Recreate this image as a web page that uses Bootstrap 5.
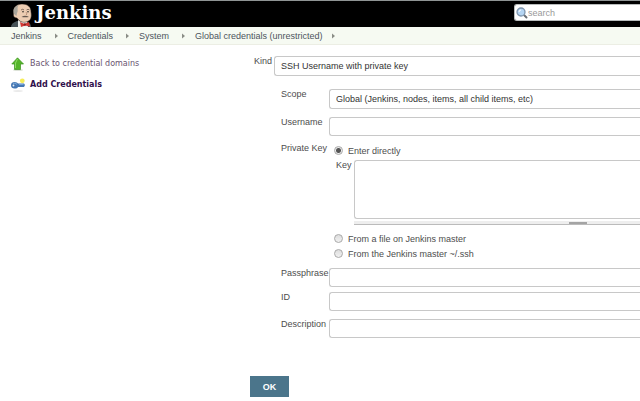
<!DOCTYPE html>
<html lang="en">
<head>
<meta charset="utf-8">
<meta name="viewport" content="width=device-width, initial-scale=1">
<title>Add Credentials [Jenkins]</title>
<link href="https://cdn.jsdelivr.net/npm/bootstrap@5.3.0/dist/css/bootstrap.min.css" rel="stylesheet">
<style>
body{font-family:"Liberation Sans",Arial,sans-serif;font-size:9px;line-height:12px;color:#4d4d4d;background:#fff}
.topbar{background:#000;border-top:1px solid #8f9494;height:27px;padding-left:11px}
.brand-name{font-family:"DejaVu Serif",Georgia,serif;font-weight:700;font-size:18px;line-height:24px;color:#fff}
.brand-link{gap:4px}
.brand-link svg{margin-top:3px}
.search-box{width:126px;height:17px;margin-top:3px;background:#fff;border:1px solid #b8bcbc;border-right:0;border-radius:3px 0 0 3px;padding-left:1px}
.search-box input{border:0;outline:0;background:transparent;padding:0;font-size:9px;line-height:12px;min-width:0}
.search-box input::placeholder{color:#999;opacity:1}
.crumbs{background:#f6faf2;border-bottom:1px solid #eceee4;height:18px;padding-left:11px}
.crumbs a{color:#4d545d}
.crumbs .sep{width:26px}
.side{width:250px;padding:12px 0 0 11px}
.side a{color:#6a5470;font-family:"DejaVu Sans",Verdana,sans-serif;font-size:8px;gap:5px;height:14px}
.side .task-list{gap:7px}
.side a.active-task{color:#30104c;font-weight:700}
.config{padding-top:11px}
.config label,.lab{line-height:10px}
.kind-row{padding-left:4px;gap:3px}
.kind-row label{width:17px}
.nested{padding-left:31px}
.nested .lab{width:48px}
.field{height:19px;border:1px solid #c8c8c8;border-right:0;border-radius:3px 0 0 3px;padding:0 6px;background:#fff;color:#333;font-size:9px;line-height:12px;appearance:none;min-width:0;outline:0}
select.field{height:20px}
.row-a{margin-top:13px}
.row-b{margin-top:8px}
.row-c{margin-top:5px}
.row-d{margin-top:7px}
.choice{gap:5px;height:15px;padding-left:5px}
.choice input{appearance:none;width:9px;height:9px;margin:0;border:1px solid #a9a9a9;border-radius:50%;background:linear-gradient(#ddd,#f1f1f1)}
.choice input:checked{background:radial-gradient(circle,#555 0 2px,#ececec 3px)}
.key-row{padding-left:7px;gap:2px;margin-top:2px}
.key-row label{width:16px}
.key-row textarea{height:59px;resize:none;padding:3px 6px}
.grip{height:4px;margin-top:2px;background:#eee;border-bottom:1px solid #bbb;padding-left:215px}
.grip span{width:18px;height:2px;background:#a4a4a4}
.after-key{margin-top:6px}
.ok-btn{--bs-btn-color:#fff;--bs-btn-bg:#4b758b;--bs-btn-border-color:#4b758b;--bs-btn-hover-bg:#3d6478;--bs-btn-hover-color:#fff;width:39px;height:21px;padding:0;font-size:9px;line-height:12px;font-weight:700;margin-top:38px}
</style>
<script src="https://cdn.jsdelivr.net/npm/bootstrap@5.3.0/dist/js/bootstrap.bundle.min.js" defer></script>
</head>
<body class="overflow-x-hidden">
<header class="topbar d-flex justify-content-between align-items-start">
  <a class="brand-link d-flex text-decoration-none" href="#">
    <svg width="21" height="23" viewBox="0 0 21 23" class="flex-shrink-0" aria-hidden="true">
      <path d="M0 23Q0 19 6 17L16 18Q20 19 20 23Z" fill="#465257"/>
      <path d="M7 16L11 18L16 17L17 23H7Z" fill="#eef0ee"/>
      <path d="M3 8C2 3 6 0 11 0C17 0 20 3 20 8C21 13 20 17 15 18C11 19 8 17 6 14C2 14 2 10 3 8Z" fill="#edcdb2" stroke="#2c211c" stroke-width=".5"/>
      <path d="M3 10C1 5 4 2 8 1C5 4 8 6 6 9L5.500 12Z" fill="#aaa69c"/>
      <path d="M10 6Q12 4.500 13 6M15.500 6Q17 4.500 18.500 6" fill="none" stroke="#6a564a" stroke-width=".8"/>
      <circle cx="12" cy="7.800" r=".8" fill="#292521"/><circle cx="17" cy="7.800" r=".8" fill="#292521"/>
      <path d="M15 8Q17 10.500 15 11" fill="none" stroke="#a97c64" stroke-width=".7"/>
      <path d="M10.500 13Q14 10.500 18 13Q14 13.500 10.500 13Z" fill="#66594f"/>
      <path d="M9 18L13.500 20L18 18L19 22.500L14 21.500L10 23Z" fill="#d33833"/>
      <circle cx="13.800" cy="20.500" r="1.200" fill="#8c1b1b"/>
    </svg>
    <span class="brand-name">Jenkins</span>
  </a>
  <form class="search-box d-flex align-items-center" onsubmit="return false">
    <svg width="12" height="12" viewBox="0 0 12 12" class="flex-shrink-0" aria-hidden="true">
      <path d="M8 8L10.500 10.500" stroke="#6b6f74" stroke-width="2" stroke-linecap="round"/>
      <circle cx="5" cy="5" r="4" fill="#b5d5f3" stroke="#7f96ae" stroke-width="1.300"/>
      <path d="M3 5Q3 3 5 3" stroke="#fff" fill="none"/>
    </svg>
    <input class="flex-grow-1" type="text" placeholder="search" aria-label="search">
  </form>
</header>
<nav class="crumbs d-flex align-items-center" aria-label="breadcrumb">
  <a class="text-decoration-none" href="#">Jenkins</a>
  <svg class="sep" height="6" viewBox="0 0 26 6" aria-hidden="true"><path d="M13 .5L16 3L13 5.500Z" fill="#8a8d86"/></svg>
  <a class="text-decoration-none" href="#">Credentials</a>
  <svg class="sep" height="6" viewBox="0 0 26 6" aria-hidden="true"><path d="M13 .5L16 3L13 5.500Z" fill="#8a8d86"/></svg>
  <a class="text-decoration-none" href="#">System</a>
  <svg class="sep" height="6" viewBox="0 0 26 6" aria-hidden="true"><path d="M13 .5L16 3L13 5.500Z" fill="#8a8d86"/></svg>
  <a class="text-decoration-none" href="#">Global credentials (unrestricted)</a>
  <svg class="sep" height="6" viewBox="0 0 26 6" aria-hidden="true"><path d="M9 .5L12 3L9 5.500Z" fill="#8a8d86"/></svg>
</nav>
<div class="d-flex">
  <aside class="side flex-shrink-0">
    <div class="task-list d-flex flex-column">
      <a class="d-flex align-items-center text-decoration-none" href="#">
        <svg width="14" height="14" viewBox="0 0 14 14" aria-hidden="true"><ellipse cx="7" cy="13" rx="5" ry="1" fill="#dde3d8"/><path d="M6.500 .8L12.500 7H9.500V12.500H3.500V7H.8Z" fill="#55b52b" stroke="#3b921c" stroke-width=".7"/><path d="M6.500 2L4.500 6V11" fill="none" stroke="#8fdc65"/></svg>
        <span>Back to credential domains</span>
      </a>
      <a class="active-task d-flex align-items-center text-decoration-none" href="#">
        <svg width="14" height="14" viewBox="0 0 14 14" aria-hidden="true"><ellipse cx="7" cy="13" rx="5" ry=".8" fill="#e4e4e4"/><circle cx="11.300" cy="2.800" r="2.400" fill="#f6ed58"/><path d="M3.500 4C5.500 4 6.500 4.800 7 5.500H13L14 7L13 9H7C6.500 10 5.500 10.500 3.500 10.500C1.500 10.500 0 9.500 0 7.300S1.500 4 3.500 4Z" fill="#4678b4"/><path d="M2 5.500Q4 4.500 6 6.300M8 6.500H12.500" fill="none" stroke="#82aede" stroke-width=".8"/><circle cx="2.500" cy="7.500" r=".9" fill="#e6eef7"/></svg>
        <span>Add Credentials</span>
      </a>
    </div>
  </aside>
  <main class="flex-grow-1">
    <form class="config" onsubmit="return false">
      <div class="kind-row d-flex">
        <label for="kind">Kind</label>
        <select id="kind" class="field flex-grow-1"><option>SSH Username with private key</option></select>
      </div>
      <div class="nested">
        <div class="row-a d-flex">
          <label class="lab flex-shrink-0" for="scope">Scope</label>
          <select id="scope" class="field flex-grow-1"><option>Global (Jenkins, nodes, items, all child items, etc)</option></select>
        </div>
        <div class="row-b d-flex">
          <label class="lab flex-shrink-0" for="user">Username</label>
          <input id="user" type="text" class="field flex-grow-1">
        </div>
        <div class="row-d d-flex" role="radiogroup" aria-labelledby="pk">
          <span class="lab flex-shrink-0" id="pk">Private Key</span>
          <div class="flex-grow-1">
            <div class="choice d-flex align-items-center"><input type="radio" name="src" id="direct" checked><label for="direct">Enter directly</label></div>
            <div class="key-row d-flex">
              <label for="key">Key</label>
              <div class="flex-grow-1">
                <textarea id="key" class="field d-block w-100"></textarea>
                <div class="grip d-flex align-items-center"><span></span></div>
              </div>
            </div>
            <div class="choice after-key d-flex align-items-center"><input type="radio" name="src" id="file"><label for="file">From a file on Jenkins master</label></div>
            <div class="choice d-flex align-items-center"><input type="radio" name="src" id="ssh"><label for="ssh">From the Jenkins master ~/.ssh</label></div>
          </div>
        </div>
        <div class="row-d d-flex">
          <label class="lab flex-shrink-0" for="pass">Passphrase</label>
          <input id="pass" type="password" class="field flex-grow-1">
        </div>
        <div class="row-c d-flex">
          <label class="lab flex-shrink-0" for="cid">ID</label>
          <input id="cid" type="text" class="field flex-grow-1">
        </div>
        <div class="row-b d-flex">
          <label class="lab flex-shrink-0" for="desc">Description</label>
          <input id="desc" type="text" class="field flex-grow-1">
        </div>
      </div>
      <button type="submit" class="btn ok-btn rounded-0">OK</button>
    </form>
  </main>
</div>
</body>
</html>
